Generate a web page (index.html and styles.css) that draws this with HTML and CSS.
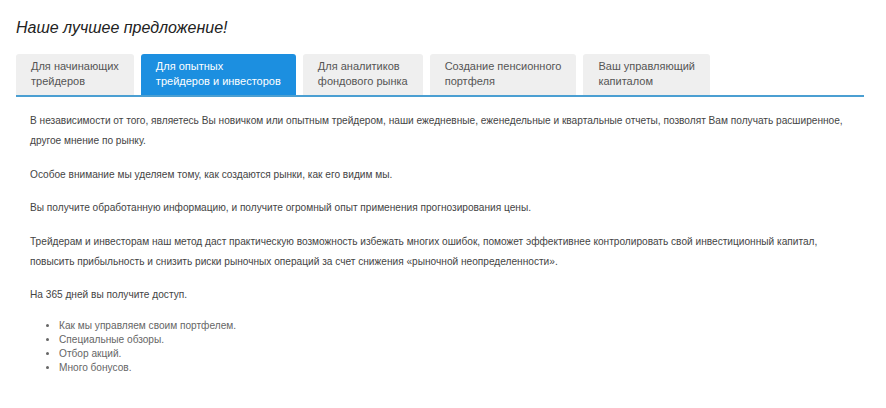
FILE: index.html
```html
<!DOCTYPE html>
<html lang="ru">
<head>
<meta charset="utf-8">
<link rel="stylesheet" href="styles.css">
</head>
<body>
<div class="page">
  <h2 class="title">Наше лучшее предложение!</h2>
  <div class="tabs">
    <div class="tab">Для начинающих<br>трейдеров</div>
    <div class="tab active">Для опытных<br>трейдеров и инвесторов</div>
    <div class="tab">Для аналитиков<br>фондового рынка</div>
    <div class="tab">Создание пенсионного<br>портфеля</div>
    <div class="tab">Ваш управляющий<br>капиталом</div>
  </div>
  <div class="content">
    <p>В независимости от того, являетесь Вы новичком или опытным трейдером, наши ежедневные, еженедельные и квартальные отчеты, позволят Вам получать расширенное, другое мнение по рынку.</p>
    <p>Особое внимание мы уделяем тому, как создаются рынки, как его видим мы.</p>
    <p>Вы получите обработанную информацию, и получите огромный опыт применения прогнозирования цены.</p>
    <p>Трейдерам и инвесторам наш метод даст практическую возможность избежать многих ошибок, поможет эффективнее контролировать свой инвестиционный капитал, повысить прибыльность и снизить риски рыночных операций за счет снижения «рыночной неопределенности».</p>
    <p>На 365 дней вы получите доступ.</p>
    <ul class="list">
      <li>Как мы управляем своим портфелем.</li>
      <li>Специальные обзоры.</li>
      <li>Отбор акций.</li>
      <li>Много бонусов.</li>
    </ul>
  </div>
</div>
</body>
</html>
```
FILE: styles.css
```css
html, body {
  margin: 0;
  padding: 0;
  background: #fff;
}
.page {
  width: 848px;
  padding: 18px 0 0 16px;
  font-family: "Liberation Sans", Arial, sans-serif;
}
.title {
  margin: 0;
  font-size: 16px;
  line-height: 20px;
  font-weight: normal;
  font-style: italic;
  color: #222;
}
.tabs {
  display: flex;
  gap: 7px;
  margin-top: 16px;
  border-bottom: 2px solid #4b9fd2;
}
.tab {
  background: #efefef;
  color: #555;
  font-size: 11px;
  line-height: 15px;
  padding: 5px 15px 6px 15px;
  border-radius: 3px 3px 0 0;
}
.tab.active {
  background: #1c8fe0;
  color: #fff;
}
.content {
  padding: 14px 14px 0 14px;
  color: #444;
  font-size: 10.15px;
  line-height: 20px;
}
.content p {
  margin: 0 0 13.5px 0;
}
.list {
  margin: 0;
  padding-left: 29px;
  line-height: 14.3px;
  color: #666;
}
```
